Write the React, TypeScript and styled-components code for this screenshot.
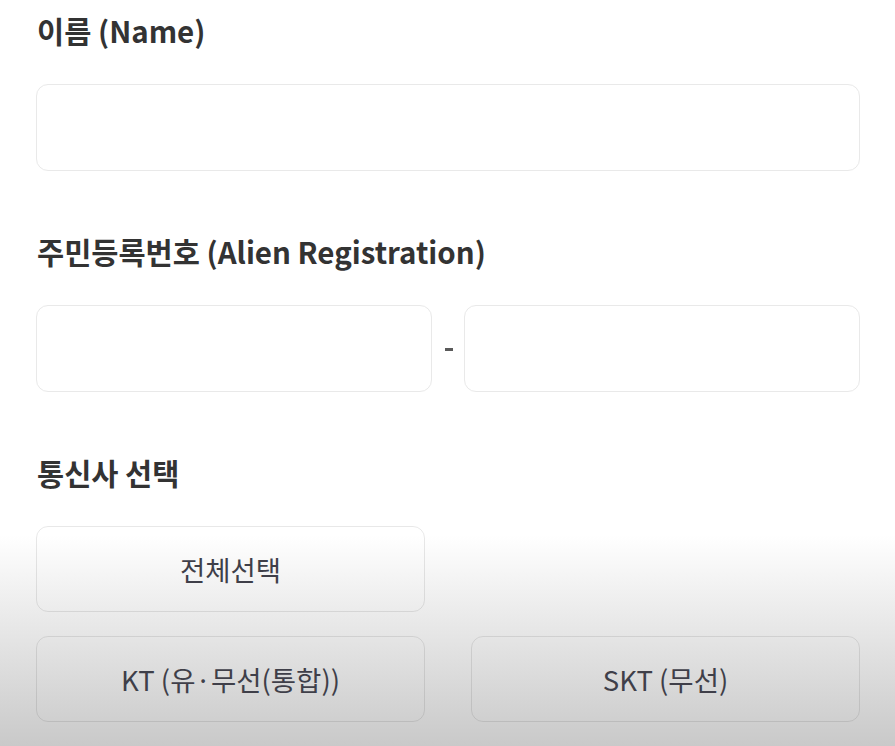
import React from "react";
import styled, { createGlobalStyle } from "styled-components";

const GlobalStyle = createGlobalStyle`
  html, body {
    margin: 0;
    padding: 0;
  }
  html {
    background: linear-gradient(to bottom, #ffffff 0px, #ffffff 535px, #c9c9c9 746px);
    background-repeat: no-repeat;
    min-height: 746px;
  }
  body {
    min-height: 746px;
    font-family: "Noto Sans CJK KR", "Noto Sans", sans-serif;
  }
`;

const Page = styled.div`
  padding: 10px 35px 0 36px;
  display: flex;
  flex-direction: column;
`;

const Section = styled.section<{ $first?: boolean }>`
  display: flex;
  flex-direction: column;
  margin-top: ${(p) => (p.$first ? "0" : "60px")};
`;

const Heading = styled.h2`
  margin: 0 0 34px 1px;
  font-size: 29.5px;
  line-height: 40px;
  font-weight: 700;
  color: #333333;
`;

const TextInput = styled.input`
  box-sizing: border-box;
  width: 100%;
  height: 87px;
  margin: 0;
  padding: 0 20px;
  border: 1px solid #e9e9e9;
  border-radius: 12px;
  background: #ffffff;
  font-family: inherit;
  font-size: 26px;
  color: #333;
  outline: none;
`;

const IdRow = styled.div`
  display: grid;
  grid-template-columns: 1fr 32px 1fr;
  align-items: center;
`;

const Dash = styled.span`
  display: flex;
  justify-content: center;
  align-items: center;
  &::before {
    content: "";
    width: 8px;
    height: 3px;
    background: #5a5a5a;
    margin-left: 1px;
    margin-top: 2px;
  }
`;

const CarrierGrid = styled.div`
  display: grid;
  grid-template-columns: 1fr 1fr;
  column-gap: 46px;
  row-gap: 24px;
`;

const CarrierButton = styled.button<{ $span?: boolean }>`
  box-sizing: border-box;
  height: 86px;
  margin: 0;
  padding: 0;
  border: 1px solid rgba(0, 0, 0, 0.09);
  border-radius: 12px;
  background: transparent;
  font-family: "Noto Sans CJK KR", "Noto Sans", sans-serif;
  font-size: 27.5px;
  font-weight: 400;
  color: #3f3f49;
  cursor: pointer;
  grid-column: ${(p) => (p.$span ? "1 / 2" : "auto")};
`;

export default function App() {
  return (
    <>
      <GlobalStyle />
      <Page>
        <Section $first>
          <Heading>이름 (Name)</Heading>
          <TextInput type="text" aria-label="이름" />
        </Section>
        <Section>
          <Heading>주민등록번호 (Alien Registration)</Heading>
          <IdRow>
            <TextInput type="text" aria-label="주민등록번호 앞자리" />
            <Dash aria-hidden="true" />
            <TextInput type="password" aria-label="주민등록번호 뒷자리" />
          </IdRow>
        </Section>
        <Section>
          <Heading>통신사 선택</Heading>
          <CarrierGrid>
            <CarrierButton $span>전체선택</CarrierButton>
            <div />
            <CarrierButton>KT (유·무선(통합))</CarrierButton>
            <CarrierButton>SKT (무선)</CarrierButton>
          </CarrierGrid>
        </Section>
      </Page>
    </>
  );
}
